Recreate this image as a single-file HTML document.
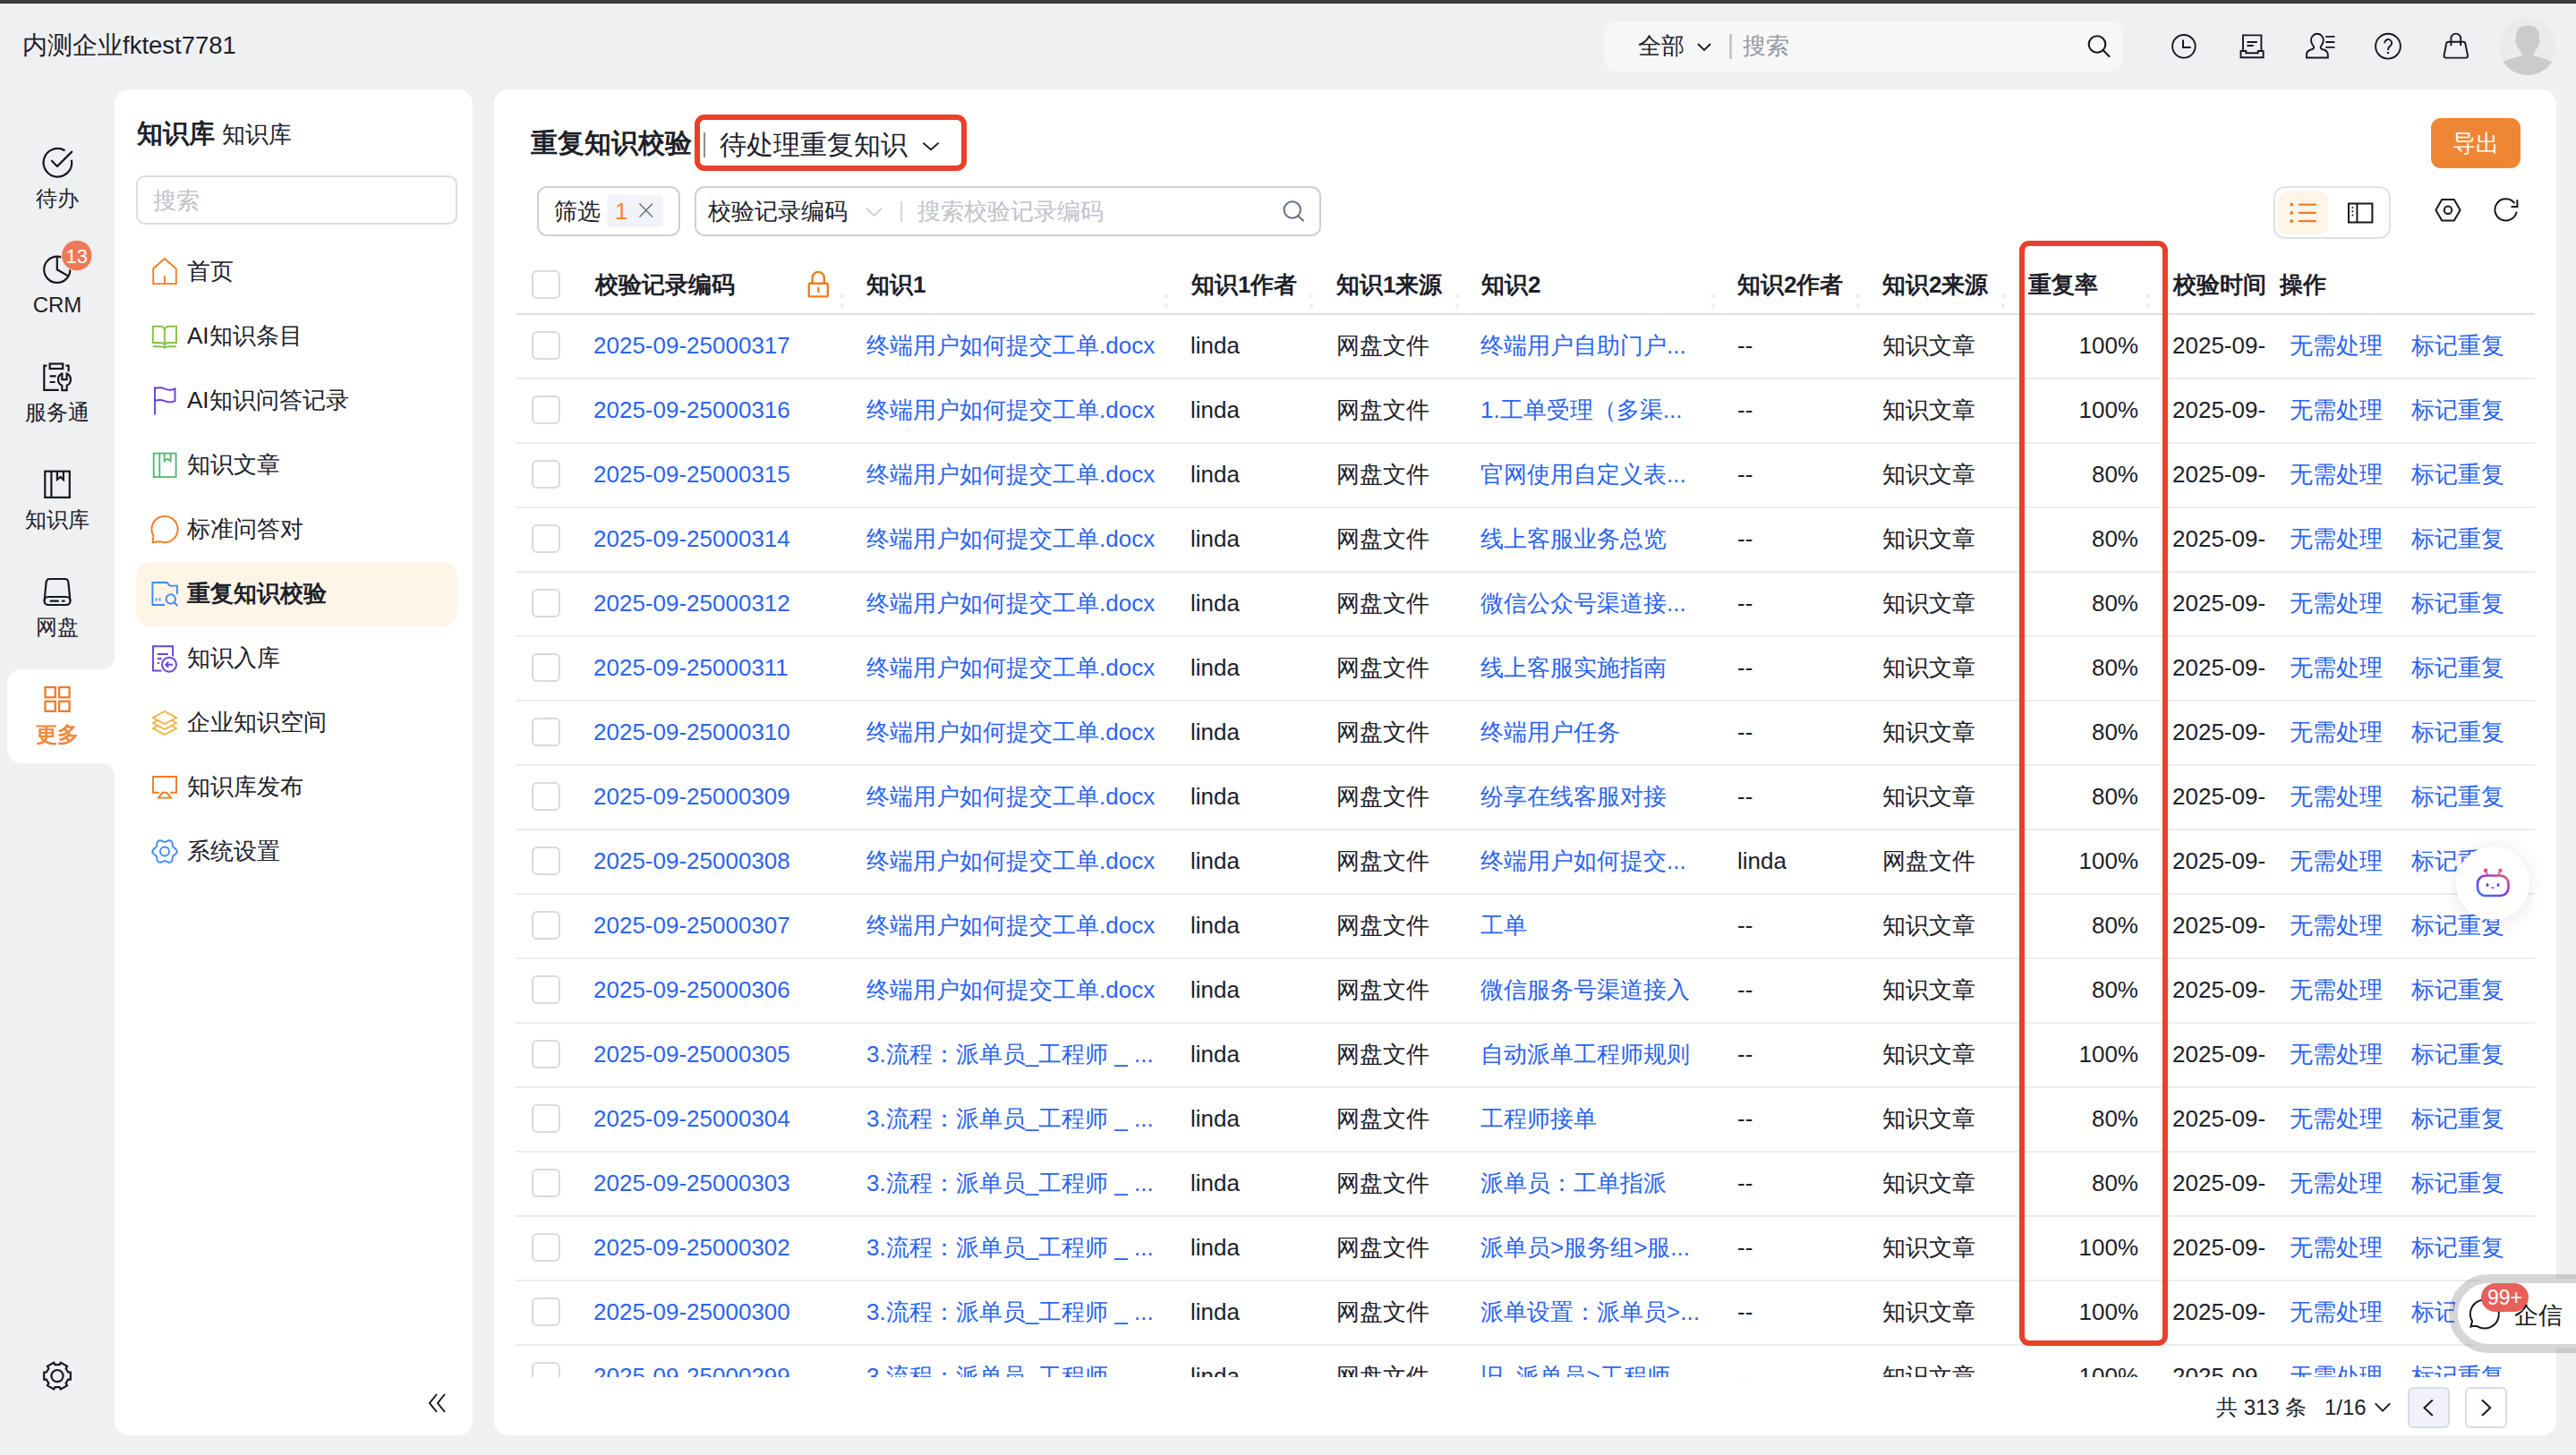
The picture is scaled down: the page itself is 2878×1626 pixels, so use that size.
<!DOCTYPE html>
<html><head><meta charset="utf-8">
<style>
*{box-sizing:border-box;margin:0;padding:0}
html,body{width:2878px;height:1626px;overflow:hidden;background:#eff0f2;font-family:"Liberation Sans",sans-serif;color:#1d2129;position:relative}
.abs{position:absolute}
.topbar{position:absolute;left:0;top:0;width:2878px;height:4px;background:#3b3b3b}
.company{position:absolute;left:25px;top:33px;font-size:27.5px;line-height:36px;color:#1d2129;white-space:nowrap}
.gsearch{position:absolute;left:1792px;top:24px;width:580px;height:56px;border-radius:14px;background:#f7f7f8}
.panel{position:absolute;background:#fff;border-radius:16px}
.rail-item{position:absolute;left:0;width:128px;text-align:center;font-size:24px;line-height:30px;color:#1d2129}
.menu{position:absolute;left:209px;font-size:26px;line-height:32px;color:#1d2129;white-space:nowrap}
.micon{position:absolute;left:168px;width:32px;height:32px}
.c{position:absolute;top:19px;font-size:26px;line-height:32px;white-space:nowrap;color:#1d2129}
.lk{color:#2a64f2}
.row{position:absolute;left:0;width:2878px;height:72px}
.row::after{content:"";position:absolute;left:576px;width:2256px;top:71px;height:2px;background:#ebecf0}
.cb{position:absolute;top:19px;width:32px;height:32px;border:2px solid #d9dae0;border-radius:6px;background:#fff}
.th{position:absolute;top:302px;font-size:26px;line-height:32px;font-weight:bold;color:#1d2129;white-space:nowrap}
.rs{position:absolute;top:329px;width:4px;height:15px;background:linear-gradient(#eceffa 0 4px,transparent 4px 11px,#eceffa 11px 15px)}
</style></head>
<body>
<div class="topbar"></div>
<div class="company">内测企业fktest7781</div>
<div class="gsearch"></div>
<div class="abs" style="left:1830px;top:35px;font-size:26px;line-height:32px">全部</div>
<div class="abs" style="left:1947px;top:35px;font-size:26px;line-height:32px;color:#9499a3">搜索</div>
<div class="abs" style="left:1932px;top:38px;width:2.5px;height:28px;background:#c3c6cd"></div>

<!-- left rail -->
<div class="rail-item" style="top:207px">待办</div>
<div class="rail-item" style="top:326px">CRM</div>
<div class="rail-item" style="top:446px">服务通</div>
<div class="rail-item" style="top:566px">知识库</div>
<div class="rail-item" style="top:686px">网盘</div>
<div class="abs" style="left:8px;top:748px;width:140px;height:105px;background:#fff;border-radius:16px 0 0 16px"></div>
<div class="abs" style="left:112px;top:730px;width:20px;height:18px;background:#fff"></div>
<div class="abs" style="left:100px;top:720px;width:28px;height:28px;background:#eff0f2;border-bottom-right-radius:14px"></div>
<div class="abs" style="left:112px;top:853px;width:20px;height:18px;background:#fff"></div>
<div class="abs" style="left:100px;top:853px;width:28px;height:28px;background:#eff0f2;border-top-right-radius:14px"></div>
<div class="rail-item" style="top:806px;color:#f0883a;font-weight:bold">更多</div>

<!-- sidebar -->
<div class="panel" style="left:128px;top:100px;width:400px;height:1504px"></div>
<div class="abs" style="left:153px;top:130px;font-size:29px;line-height:38px;font-weight:bold;white-space:nowrap">知识库 <span style="font-weight:normal;font-size:26px">知识库</span></div>
<div class="abs" style="left:152px;top:196px;width:359px;height:55px;border:2px solid #dcdde3;border-radius:10px"></div>
<div class="abs" style="left:171px;top:208px;font-size:26px;line-height:32px;color:#c0c2c9">搜索</div>
<div class="abs" style="left:152px;top:628px;width:359px;height:72px;background:#fef5e7;border-radius:16px"></div>
<div class="menu" style="top:287px">首页</div>
<div class="menu" style="top:359px">AI知识条目</div>
<div class="menu" style="top:431px">AI知识问答记录</div>
<div class="menu" style="top:503px">知识文章</div>
<div class="menu" style="top:575px">标准问答对</div>
<div class="menu" style="top:647px;font-weight:bold">重复知识校验</div>
<div class="menu" style="top:719px">知识入库</div>
<div class="menu" style="top:791px">企业知识空间</div>
<div class="menu" style="top:863px">知识库发布</div>
<div class="menu" style="top:935px">系统设置</div>

<!-- main panel -->
<div class="panel" style="left:552px;top:100px;width:2304px;height:1504px"></div>
<div class="abs" style="left:593px;top:141px;font-size:30px;line-height:38px;font-weight:bold;white-space:nowrap">重复知识校验</div>
<div class="abs" style="left:786px;top:148px;width:2.2px;height:28px;background:#8a8f99"></div>
<div class="abs" style="left:804px;top:143px;font-size:30px;line-height:38px;white-space:nowrap;color:#1d2129">待处理重复知识</div>
<div class="abs" style="left:776px;top:128px;width:304px;height:63px;border:6px solid #e8402a;border-radius:11px"></div>

<div class="abs" style="left:2716px;top:132px;width:100px;height:56px;background:#ef8634;border-radius:11px;color:#fff;font-size:26px;line-height:57px;text-align:center">导出</div>

<div class="abs" style="left:600px;top:208px;width:160px;height:56px;border:2px solid #cdd0d8;border-radius:11px"></div>
<div class="abs" style="left:619px;top:220px;font-size:26px;line-height:32px">筛选</div>
<div class="abs" style="left:678px;top:218px;width:63px;height:36px;background:#f1f3f9;border-radius:4px"></div>
<div class="abs" style="left:687px;top:220px;font-size:26px;line-height:32px;color:#f0883a">1</div>

<div class="abs" style="left:776px;top:208px;width:700px;height:56px;border:2px solid #cdd0d8;border-radius:11px"></div>
<div class="abs" style="left:791px;top:220px;font-size:26px;line-height:32px;white-space:nowrap">校验记录编码</div>
<div class="abs" style="left:1006px;top:225px;width:2px;height:23px;background:#d5d7de"></div>
<div class="abs" style="left:1025px;top:220px;font-size:26px;line-height:32px;white-space:nowrap;color:#c0c2c9">搜索校验记录编码</div>

<div class="abs" style="left:2540px;top:208px;width:131px;height:59px;border:2px solid #e0e1e8;border-radius:13px"></div>
<div class="abs" style="left:2545px;top:214px;width:56px;height:48px;background:#fef5e7;border-radius:10px"></div>

<!-- table header -->
<div class="cb" style="left:594px;top:302px"></div>
<div class="th" style="left:665px">校验记录编码</div>
<div class="th" style="left:968px">知识1</div>
<div class="th" style="left:1331px">知识1作者</div>
<div class="th" style="left:1493px">知识1来源</div>
<div class="th" style="left:1655px">知识2</div>
<div class="th" style="left:1941px">知识2作者</div>
<div class="th" style="left:2103px">知识2来源</div>
<div class="th" style="left:2266px">重复率</div>
<div class="th" style="left:2428px">校验时间</div>
<div class="th" style="left:2547px">操作</div>
<div class="rs" style="left:939px"></div>
<div class="rs" style="left:1301px"></div>
<div class="rs" style="left:1463px"></div>
<div class="rs" style="left:1626px"></div>
<div class="rs" style="left:1912px"></div>
<div class="rs" style="left:2074px"></div>
<div class="rs" style="left:2236px"></div>
<div class="rs" style="left:2398px"></div>
<div class="abs" style="left:576px;top:350px;width:2256px;height:2px;background:#dfe0e6"></div>

<div class="abs" style="left:0;top:351px;width:2878px;height:1188px;overflow:hidden">
<div class="row" style="top:0px">
<div class="cb" style="left:594px"></div>
<span class="c lk" style="left:663px">2025-09-25000317</span>
<span class="c lk" style="left:968px">终端用户如何提交工单.docx</span>
<span class="c" style="left:1330px">linda</span>
<span class="c" style="left:1493px">网盘文件</span>
<span class="c lk" style="left:1654px">终端用户自助门户...</span>
<span class="c" style="left:1941px">--</span>
<span class="c" style="left:2103px">知识文章</span>
<span class="c rt" style="right:489px">100%</span>
<span class="c" style="left:2427px">2025-09-</span>
<span class="c lk" style="left:2558px">无需处理</span>
<span class="c lk" style="left:2694px">标记重复</span>
</div>
<div class="row" style="top:72px">
<div class="cb" style="left:594px"></div>
<span class="c lk" style="left:663px">2025-09-25000316</span>
<span class="c lk" style="left:968px">终端用户如何提交工单.docx</span>
<span class="c" style="left:1330px">linda</span>
<span class="c" style="left:1493px">网盘文件</span>
<span class="c lk" style="left:1654px">1.工单受理（多渠...</span>
<span class="c" style="left:1941px">--</span>
<span class="c" style="left:2103px">知识文章</span>
<span class="c rt" style="right:489px">100%</span>
<span class="c" style="left:2427px">2025-09-</span>
<span class="c lk" style="left:2558px">无需处理</span>
<span class="c lk" style="left:2694px">标记重复</span>
</div>
<div class="row" style="top:144px">
<div class="cb" style="left:594px"></div>
<span class="c lk" style="left:663px">2025-09-25000315</span>
<span class="c lk" style="left:968px">终端用户如何提交工单.docx</span>
<span class="c" style="left:1330px">linda</span>
<span class="c" style="left:1493px">网盘文件</span>
<span class="c lk" style="left:1654px">官网使用自定义表...</span>
<span class="c" style="left:1941px">--</span>
<span class="c" style="left:2103px">知识文章</span>
<span class="c rt" style="right:489px">80%</span>
<span class="c" style="left:2427px">2025-09-</span>
<span class="c lk" style="left:2558px">无需处理</span>
<span class="c lk" style="left:2694px">标记重复</span>
</div>
<div class="row" style="top:216px">
<div class="cb" style="left:594px"></div>
<span class="c lk" style="left:663px">2025-09-25000314</span>
<span class="c lk" style="left:968px">终端用户如何提交工单.docx</span>
<span class="c" style="left:1330px">linda</span>
<span class="c" style="left:1493px">网盘文件</span>
<span class="c lk" style="left:1654px">线上客服业务总览</span>
<span class="c" style="left:1941px">--</span>
<span class="c" style="left:2103px">知识文章</span>
<span class="c rt" style="right:489px">80%</span>
<span class="c" style="left:2427px">2025-09-</span>
<span class="c lk" style="left:2558px">无需处理</span>
<span class="c lk" style="left:2694px">标记重复</span>
</div>
<div class="row" style="top:288px">
<div class="cb" style="left:594px"></div>
<span class="c lk" style="left:663px">2025-09-25000312</span>
<span class="c lk" style="left:968px">终端用户如何提交工单.docx</span>
<span class="c" style="left:1330px">linda</span>
<span class="c" style="left:1493px">网盘文件</span>
<span class="c lk" style="left:1654px">微信公众号渠道接...</span>
<span class="c" style="left:1941px">--</span>
<span class="c" style="left:2103px">知识文章</span>
<span class="c rt" style="right:489px">80%</span>
<span class="c" style="left:2427px">2025-09-</span>
<span class="c lk" style="left:2558px">无需处理</span>
<span class="c lk" style="left:2694px">标记重复</span>
</div>
<div class="row" style="top:360px">
<div class="cb" style="left:594px"></div>
<span class="c lk" style="left:663px">2025-09-25000311</span>
<span class="c lk" style="left:968px">终端用户如何提交工单.docx</span>
<span class="c" style="left:1330px">linda</span>
<span class="c" style="left:1493px">网盘文件</span>
<span class="c lk" style="left:1654px">线上客服实施指南</span>
<span class="c" style="left:1941px">--</span>
<span class="c" style="left:2103px">知识文章</span>
<span class="c rt" style="right:489px">80%</span>
<span class="c" style="left:2427px">2025-09-</span>
<span class="c lk" style="left:2558px">无需处理</span>
<span class="c lk" style="left:2694px">标记重复</span>
</div>
<div class="row" style="top:432px">
<div class="cb" style="left:594px"></div>
<span class="c lk" style="left:663px">2025-09-25000310</span>
<span class="c lk" style="left:968px">终端用户如何提交工单.docx</span>
<span class="c" style="left:1330px">linda</span>
<span class="c" style="left:1493px">网盘文件</span>
<span class="c lk" style="left:1654px">终端用户任务</span>
<span class="c" style="left:1941px">--</span>
<span class="c" style="left:2103px">知识文章</span>
<span class="c rt" style="right:489px">80%</span>
<span class="c" style="left:2427px">2025-09-</span>
<span class="c lk" style="left:2558px">无需处理</span>
<span class="c lk" style="left:2694px">标记重复</span>
</div>
<div class="row" style="top:504px">
<div class="cb" style="left:594px"></div>
<span class="c lk" style="left:663px">2025-09-25000309</span>
<span class="c lk" style="left:968px">终端用户如何提交工单.docx</span>
<span class="c" style="left:1330px">linda</span>
<span class="c" style="left:1493px">网盘文件</span>
<span class="c lk" style="left:1654px">纷享在线客服对接</span>
<span class="c" style="left:1941px">--</span>
<span class="c" style="left:2103px">知识文章</span>
<span class="c rt" style="right:489px">80%</span>
<span class="c" style="left:2427px">2025-09-</span>
<span class="c lk" style="left:2558px">无需处理</span>
<span class="c lk" style="left:2694px">标记重复</span>
</div>
<div class="row" style="top:576px">
<div class="cb" style="left:594px"></div>
<span class="c lk" style="left:663px">2025-09-25000308</span>
<span class="c lk" style="left:968px">终端用户如何提交工单.docx</span>
<span class="c" style="left:1330px">linda</span>
<span class="c" style="left:1493px">网盘文件</span>
<span class="c lk" style="left:1654px">终端用户如何提交...</span>
<span class="c" style="left:1941px">linda</span>
<span class="c" style="left:2103px">网盘文件</span>
<span class="c rt" style="right:489px">100%</span>
<span class="c" style="left:2427px">2025-09-</span>
<span class="c lk" style="left:2558px">无需处理</span>
<span class="c lk" style="left:2694px">标记重复</span>
</div>
<div class="row" style="top:648px">
<div class="cb" style="left:594px"></div>
<span class="c lk" style="left:663px">2025-09-25000307</span>
<span class="c lk" style="left:968px">终端用户如何提交工单.docx</span>
<span class="c" style="left:1330px">linda</span>
<span class="c" style="left:1493px">网盘文件</span>
<span class="c lk" style="left:1654px">工单</span>
<span class="c" style="left:1941px">--</span>
<span class="c" style="left:2103px">知识文章</span>
<span class="c rt" style="right:489px">80%</span>
<span class="c" style="left:2427px">2025-09-</span>
<span class="c lk" style="left:2558px">无需处理</span>
<span class="c lk" style="left:2694px">标记重复</span>
</div>
<div class="row" style="top:720px">
<div class="cb" style="left:594px"></div>
<span class="c lk" style="left:663px">2025-09-25000306</span>
<span class="c lk" style="left:968px">终端用户如何提交工单.docx</span>
<span class="c" style="left:1330px">linda</span>
<span class="c" style="left:1493px">网盘文件</span>
<span class="c lk" style="left:1654px">微信服务号渠道接入</span>
<span class="c" style="left:1941px">--</span>
<span class="c" style="left:2103px">知识文章</span>
<span class="c rt" style="right:489px">80%</span>
<span class="c" style="left:2427px">2025-09-</span>
<span class="c lk" style="left:2558px">无需处理</span>
<span class="c lk" style="left:2694px">标记重复</span>
</div>
<div class="row" style="top:792px">
<div class="cb" style="left:594px"></div>
<span class="c lk" style="left:663px">2025-09-25000305</span>
<span class="c lk" style="left:968px">3.流程：派单员_工程师 _ ...</span>
<span class="c" style="left:1330px">linda</span>
<span class="c" style="left:1493px">网盘文件</span>
<span class="c lk" style="left:1654px">自动派单工程师规则</span>
<span class="c" style="left:1941px">--</span>
<span class="c" style="left:2103px">知识文章</span>
<span class="c rt" style="right:489px">100%</span>
<span class="c" style="left:2427px">2025-09-</span>
<span class="c lk" style="left:2558px">无需处理</span>
<span class="c lk" style="left:2694px">标记重复</span>
</div>
<div class="row" style="top:864px">
<div class="cb" style="left:594px"></div>
<span class="c lk" style="left:663px">2025-09-25000304</span>
<span class="c lk" style="left:968px">3.流程：派单员_工程师 _ ...</span>
<span class="c" style="left:1330px">linda</span>
<span class="c" style="left:1493px">网盘文件</span>
<span class="c lk" style="left:1654px">工程师接单</span>
<span class="c" style="left:1941px">--</span>
<span class="c" style="left:2103px">知识文章</span>
<span class="c rt" style="right:489px">80%</span>
<span class="c" style="left:2427px">2025-09-</span>
<span class="c lk" style="left:2558px">无需处理</span>
<span class="c lk" style="left:2694px">标记重复</span>
</div>
<div class="row" style="top:936px">
<div class="cb" style="left:594px"></div>
<span class="c lk" style="left:663px">2025-09-25000303</span>
<span class="c lk" style="left:968px">3.流程：派单员_工程师 _ ...</span>
<span class="c" style="left:1330px">linda</span>
<span class="c" style="left:1493px">网盘文件</span>
<span class="c lk" style="left:1654px">派单员：工单指派</span>
<span class="c" style="left:1941px">--</span>
<span class="c" style="left:2103px">知识文章</span>
<span class="c rt" style="right:489px">80%</span>
<span class="c" style="left:2427px">2025-09-</span>
<span class="c lk" style="left:2558px">无需处理</span>
<span class="c lk" style="left:2694px">标记重复</span>
</div>
<div class="row" style="top:1008px">
<div class="cb" style="left:594px"></div>
<span class="c lk" style="left:663px">2025-09-25000302</span>
<span class="c lk" style="left:968px">3.流程：派单员_工程师 _ ...</span>
<span class="c" style="left:1330px">linda</span>
<span class="c" style="left:1493px">网盘文件</span>
<span class="c lk" style="left:1654px">派单员>服务组>服...</span>
<span class="c" style="left:1941px">--</span>
<span class="c" style="left:2103px">知识文章</span>
<span class="c rt" style="right:489px">100%</span>
<span class="c" style="left:2427px">2025-09-</span>
<span class="c lk" style="left:2558px">无需处理</span>
<span class="c lk" style="left:2694px">标记重复</span>
</div>
<div class="row" style="top:1080px">
<div class="cb" style="left:594px"></div>
<span class="c lk" style="left:663px">2025-09-25000300</span>
<span class="c lk" style="left:968px">3.流程：派单员_工程师 _ ...</span>
<span class="c" style="left:1330px">linda</span>
<span class="c" style="left:1493px">网盘文件</span>
<span class="c lk" style="left:1654px">派单设置：派单员>...</span>
<span class="c" style="left:1941px">--</span>
<span class="c" style="left:2103px">知识文章</span>
<span class="c rt" style="right:489px">100%</span>
<span class="c" style="left:2427px">2025-09-</span>
<span class="c lk" style="left:2558px">无需处理</span>
<span class="c lk" style="left:2694px">标记重复</span>
</div>
<div class="row" style="top:1152px">
<div class="cb" style="left:594px"></div>
<span class="c lk" style="left:663px">2025-09-25000299</span>
<span class="c lk" style="left:968px">3.流程：派单员_工程师</span>
<span class="c" style="left:1330px">linda</span>
<span class="c" style="left:1493px">网盘文件</span>
<span class="c lk" style="left:1654px">旧_派单员>工程师</span>
<span class="c" style="left:1941px">--</span>
<span class="c" style="left:2103px">知识文章</span>
<span class="c rt" style="right:489px">100%</span>
<span class="c" style="left:2427px">2025-09-</span>
<span class="c lk" style="left:2558px">无需处理</span>
<span class="c lk" style="left:2694px">标记重复</span>
</div>
</div>

<div class="abs" style="left:2256px;top:269px;width:165.5px;height:1234.5px;border:6px solid #e8402a;border-radius:11px"></div>

<!-- pagination -->
<div class="abs" style="left:2476px;top:1557px;font-size:24px;line-height:32px;white-space:nowrap">共 313 条</div>
<div class="abs" style="left:2597px;top:1557px;font-size:24px;line-height:32px;white-space:nowrap">1/16</div>
<div class="abs" style="left:2690px;top:1550px;width:47px;height:46px;background:#f1f2f9;border:2px solid #d9dbe3;border-radius:6px"></div>
<div class="abs" style="left:2754px;top:1550px;width:47px;height:46px;background:#fff;border:2px solid #d9dbe3;border-radius:6px"></div>


<svg class="abs" style="left:0;top:0" width="2878" height="1626" viewBox="0 0 2878 1626" fill="none" stroke-linecap="butt" stroke-linejoin="miter">
<g stroke="#141820" stroke-width="2.2">
 <!-- 待办 -->
 <path d="M72.5 168.2 A15.8 15.8 0 1 0 79.9 178.7"/>
 <path d="M57.9 179.7 L63.9 185.9 L80.2 169.6" stroke-linecap="round" stroke-linejoin="round"/>
 <!-- CRM -->
 <circle cx="63.8" cy="301.3" r="14.6"/>
 <path d="M63.8 286.7 V301.3 L76.6 308.6"/>
 <!-- 服务通 -->
 <path d="M52.4 408.7 H49.3 V435.9 H65.8"/>
 <rect x="55.6" y="406.5" width="14.6" height="5.5"/>
 <path d="M73.5 408.7 H76.6 V415.3"/>
 <path d="M55.6 420.3 H62.7 M55.6 427 H61.6"/>
 <path d="M69.3 417.6 A7.2 7.2 0 0 0 69.3 430.8 V436.2 H74.6 V430.8 A7.2 7.2 0 0 0 74.6 417.6 V424.2 H69.3 Z"/>
 <!-- 知识库 -->
 <rect x="50.3" y="526.7" width="27.5" height="29.2"/>
 <path d="M57.4 526.7 V555.9"/>
 <path d="M63.9 526.7 V536 L67.5 533 L70.9 536 V526.7"/>
 <!-- 网盘 -->
 <path d="M49.6 671.5 L51.6 650.8 Q52 647 55.5 647 H72.5 Q76 647 76.4 650.8 L78.4 671.5"/>
 <rect x="49.5" y="667" width="29" height="9" rx="4.5"/>
 <path d="M55.6 671.6 H65.8 M68.9 671.6 H72.6"/>
 <!-- gear bottom -->
 <path d="M76.1 1533.5 L78.8 1533.5 L78.8 1541.7 L76.1 1541.7 L73.6 1546.0 L75.0 1548.4 L67.8 1552.5 L66.5 1550.1 L61.5 1550.1 L60.2 1552.5 L53.0 1548.4 L54.4 1546.0 L51.9 1541.7 L49.2 1541.7 L49.2 1533.5 L51.9 1533.5 L54.4 1529.2 L53.0 1526.8 L60.2 1522.7 L61.5 1525.1 L66.5 1525.1 L67.8 1522.7 L75.0 1526.8 L73.6 1529.2Z"/>
 <circle cx="64" cy="1537.6" r="6.6"/>
 <!-- collapse << -->
 <path d="M488 1558 L480 1568 L488 1578 M497 1558 L489 1568 L497 1578" stroke-width="2"/>
</g>
<!-- 更多 -->
<g stroke="#ee7d2a" stroke-width="2.3">
 <rect x="50.5" y="768" width="11.3" height="11.3"/><rect x="66.1" y="768" width="11.5" height="11.3"/>
 <rect x="50.5" y="783.8" width="11.3" height="11"/><rect x="66.1" y="783.8" width="11.5" height="11"/>
</g>
<!-- CRM badge -->
<circle cx="85.8" cy="285.5" r="17.2" fill="#ee7858" stroke="#eff0f2" stroke-width="1"/>
<text x="85.8" y="293.5" fill="#fff" font-size="22" text-anchor="middle" font-family="Liberation Sans">13</text>

<!-- sidebar menu icons -->
<g stroke-width="1.8">
 <path d="M171.2 317.1 V300.2 L183.9 289 L196.8 300.2 V317.1 Z M183.9 317 V308" stroke="#ee7d22"/>
 <path d="M170.8 383 V364.8 H178.5 Q183.9 364.8 183.9 369.5 Q183.9 364.8 189.3 364.8 H197 V383 H189.3 Q183.9 383 183.9 386.5 Q183.9 383 178.5 383 Z M183.9 369.5 V383 M170.8 387.2 H178.5 Q183.9 387.2 183.9 389.5 Q183.9 387.2 189.3 387.2 H197" stroke="#82c341" stroke-width="1.9"/>
 <path d="M173 463.5 V432.2 M173 434.5 Q178.5 432 184 434.5 T195.5 434.5 V448.2 Q190 450.5 184 448.2 T173 448.2" stroke="#6b3fe0" stroke-width="1.9"/>
 <path d="M171.7 506.6 H196.6 V533.1 H171.7 Z M178.3 506.6 V533.1 M183.6 506.6 V515.2 L187.1 512.8 L190.7 515.2 V506.6" stroke="#4cb86b"/>
 <path d="M171.4 598.8 A14.6 14.6 0 1 1 179.0 605.2 Q174.5 605 170.5 606.4 Z" stroke="#ee7d22" stroke-width="1.9" stroke-linejoin="round"/>
 <path d="M184 676 H170.4 V651 H186.6 L189.6 654.6 H197.9 V664" stroke="#3d8af7" stroke-width="1.9"/>
 <circle cx="190.8" cy="669.5" r="5.2" stroke="#3d8af7" stroke-width="1.9"/>
 <path d="M194.6 673.3 L198.4 677" stroke="#3d8af7" stroke-width="1.9"/>
 <path d="M174.6 668.3 V671.7 M178.6 668.3 V671.7" stroke="#3d8af7" stroke-width="1.6"/>
 <path d="M180.5 749.5 H171 V722.3 H193.1 V733.5 M176 731 H187.8 M176 736 H180.5 M176 741 H178" stroke="#6b3fe0" stroke-width="1.9"/>
 <circle cx="189" cy="742.7" r="8" stroke="#6b3fe0" stroke-width="1.9"/>
 <path d="M193 742.7 H185.5 M188.3 739.6 L185.2 742.7 L188.3 745.8" stroke="#6b3fe0" stroke-width="1.9"/>
 <g stroke="#f2b13b" stroke-width="1.9" fill="#fff" stroke-linejoin="round">
  <path d="M170.8 814 L184 807 L197.2 814 L184 821 Z"/>
  <path d="M170.8 808 L184 801 L197.2 808 L184 815 Z"/>
  <path d="M170.8 802 L184 795 L197.2 802 L184 809 Z"/>
 </g>
 <path d="M178 885.8 H171 V868 H197 V885.8 H190 M181.6 885.8 H186.4 L191 891.6 H177 Z" stroke="#ee7d22" stroke-width="1.9"/>
 <path d="M197.7 951.5 L197.6 952.2 L197.3 952.9 L196.9 953.5 L196.4 954.1 L195.8 954.7 L195.2 955.1 L194.6 955.6 L194.0 956.0 L193.6 956.4 L193.3 956.9 L193.0 957.4 L192.9 958.0 L192.8 958.6 L192.7 959.4 L192.6 960.1 L192.5 960.9 L192.2 961.7 L191.9 962.4 L191.4 962.9 L190.8 963.4 L190.2 963.6 L189.5 963.8 L188.7 963.7 L187.9 963.5 L187.2 963.3 L186.4 963.0 L185.8 962.7 L185.1 962.4 L184.6 962.3 L184.0 962.2 L183.4 962.3 L182.9 962.4 L182.2 962.7 L181.6 963.0 L180.8 963.3 L180.1 963.5 L179.3 963.7 L178.5 963.8 L177.8 963.6 L177.2 963.4 L176.6 962.9 L176.1 962.4 L175.8 961.7 L175.5 960.9 L175.4 960.1 L175.3 959.4 L175.2 958.6 L175.1 958.0 L175.0 957.4 L174.7 956.9 L174.4 956.4 L174.0 956.0 L173.4 955.6 L172.8 955.1 L172.2 954.7 L171.6 954.1 L171.1 953.5 L170.7 952.9 L170.4 952.2 L170.3 951.5 L170.4 950.8 L170.7 950.1 L171.1 949.5 L171.6 948.9 L172.2 948.3 L172.8 947.9 L173.4 947.4 L174.0 947.0 L174.4 946.6 L174.7 946.1 L175.0 945.6 L175.1 945.0 L175.2 944.4 L175.3 943.6 L175.4 942.9 L175.5 942.1 L175.8 941.3 L176.1 940.6 L176.6 940.1 L177.2 939.6 L177.8 939.4 L178.5 939.2 L179.3 939.3 L180.1 939.5 L180.8 939.7 L181.6 940.0 L182.2 940.3 L182.9 940.6 L183.4 940.7 L184.0 940.8 L184.6 940.7 L185.1 940.6 L185.8 940.3 L186.4 940.0 L187.2 939.7 L187.9 939.5 L188.7 939.3 L189.5 939.2 L190.2 939.4 L190.8 939.6 L191.4 940.1 L191.9 940.6 L192.2 941.3 L192.5 942.1 L192.6 942.9 L192.7 943.6 L192.8 944.4 L192.9 945.0 L193.0 945.6 L193.3 946.1 L193.6 946.6 L194.0 947.0 L194.6 947.4 L195.2 947.9 L195.8 948.3 L196.4 948.9 L196.9 949.5 L197.3 950.1 L197.6 950.8Z" stroke="#3d8af7" stroke-width="1.9"/>
 <circle cx="184" cy="951.5" r="5" stroke="#3d8af7" stroke-width="1.9"/>
</g>

<!-- top bar icons -->
<g stroke="#141820" stroke-width="1.9">
 <path d="M1897 49 L1904 56 L1911 49" stroke-width="1.8"/>
 <circle cx="2343" cy="49.5" r="9.3" stroke-width="2.1"/>
 <path d="M2349.8 56.3 L2356.5 63" stroke-width="2.1" stroke-linecap="round"/>
 <circle cx="2439.9" cy="51.8" r="12.8"/>
 <path d="M2439 44.4 V53 H2447.7" stroke-width="2"/>
 <path d="M2506 56.6 V39.4 H2526.4 V56.6 M2510.4 47 H2521.8 M2510.4 51 H2517.7" stroke-width="1.9"/>
 <path d="M2503.5 57 H2509.3 V59.3 H2522.7 V57 H2528.6 V64.3 H2503.5 Z" stroke-width="1.9"/>
 <path d="M2577 64.5 V61 Q2577 56.5 2583.5 55 Q2585.5 54.3 2585 52 Q2582 48.5 2582 45 A6.9 7.2 0 0 1 2595.8 45 Q2595.8 48.5 2592.8 52 Q2592.3 54.3 2594.3 55 Q2600.8 56.5 2600.8 61 V64.5 Z" stroke-width="1.9"/>
 <path d="M2599 40.9 H2607.7 M2599 47 H2607.7 M2599 52.9 H2607.7" stroke-width="1.9" stroke-linecap="round"/>
 <circle cx="2668" cy="51.7" r="13.9" stroke-width="1.9"/>
 <path d="M2664.2 48.2 A4 4 0 1 1 2670.4 51.4 Q2668 53 2668 56" stroke-width="1.9"/>
 <circle cx="2668" cy="59" r="1.2" fill="#141820" stroke="none"/>
 <path d="M2738.4 51.2 V43 A5.4 5.4 0 0 1 2749.2 43 V51.2" stroke-width="1.9"/>
 <path d="M2735.5 46.8 H2752 Q2754 46.8 2754.4 48.8 L2757 62 Q2757.3 64.6 2755 64.6 H2732.6 Q2730.3 64.6 2730.6 62 L2733.1 48.8 Q2733.5 46.8 2735.5 46.8 Z" stroke-width="1.9"/>
</g>
<!-- avatar -->
<circle cx="2824" cy="52" r="32" fill="#ebebeb"/>
<clipPath id="avc"><circle cx="2824" cy="52" r="32"/></clipPath>
<path clip-path="url(#avc)" d="M2811.2 40 Q2811.2 28.5 2824 28.5 Q2836.8 28.5 2836.8 40 L2837.6 46.5 Q2836 53 2832 57.5 L2830 62.5 Q2845 65 2856 72 V90 H2790 V72 Q2803 65 2818 62.5 L2816 57.5 Q2812 53 2810.4 46.5 Z" fill="#cbcbcb"/>

<!-- main header icons -->
<g stroke="#141820" stroke-width="1.9">
 <path d="M1031.3 159.6 L1040 167.2 L1048.7 159.6" stroke-width="1.9"/>
 <path d="M968 232.8 L976.5 241 L985 232.8" stroke="#c5c8d0" stroke-width="1.6"/>
 <path d="M714.5 227.5 L729 242.6 M729 227.5 L714.5 242.6" stroke="#6b7280" stroke-width="1.5"/>
 <circle cx="1443.8" cy="234.5" r="9.2" stroke="#667085" stroke-width="2"/>
 <path d="M1450.6 241.4 L1456 246.6" stroke="#667085" stroke-width="2.1" stroke-linecap="round"/>
 <g stroke="#ee7d2a" stroke-width="2.3" stroke-linecap="round">
  <path d="M2568.8 228.6 H2587 M2568.8 237.9 H2587 M2568.8 247.2 H2587"/>
 </g>
 <circle cx="2560.3" cy="228.6" r="1.9" fill="#ee7d2a" stroke="none"/>
 <circle cx="2560.3" cy="237.9" r="1.9" fill="#ee7d2a" stroke="none"/>
 <circle cx="2560.3" cy="247.2" r="1.9" fill="#ee7d2a" stroke="none"/>
 <rect x="2624" y="227.5" width="26.4" height="21" stroke-width="2"/>
 <path d="M2633.4 227.5 V248.5" stroke-width="2"/>
 <circle cx="2628.4" cy="232" r="1" fill="#141820" stroke="none"/>
 <circle cx="2628.4" cy="236.3" r="1" fill="#141820" stroke="none"/>
 <circle cx="2628.4" cy="240.5" r="1" fill="#141820" stroke="none"/>
 <path d="M2748.6 234.8 L2741.8 246.6 L2728.2 246.6 L2721.4 234.8 L2728.2 223.0 L2741.8 223.0Z" stroke-width="2" stroke-linejoin="round"/>
 <circle cx="2735" cy="234.8" r="4.2" stroke-width="2"/>
 <path d="M2811.6 236.6 A12.2 12.2 0 1 1 2809.5 227.2" stroke-width="2"/>
 <path d="M2812.4 223.2 V230.9 H2805.5" stroke-width="2"/>
 <!-- lock -->
 <g stroke="#ee7d22" stroke-width="2.4">
  <rect x="903.8" y="316.8" width="21" height="14.6" rx="1"/>
  <path d="M907.6 316.8 V310.5 A6.6 6.6 0 0 1 920.8 310.5 V316.8"/>
  <path d="M914.3 322 V326" stroke-linecap="round"/>
 </g>
 <!-- pagination -->
 <path d="M2653.8 1568.3 L2662 1576.6 L2670.2 1568.3" stroke-width="1.9"/>
 <path d="M2717.8 1564.5 L2708.5 1573.2 L2717.8 1582" stroke-width="2"/>
 <path d="M2773 1564.5 L2782.3 1573.2 L2773 1582" stroke-width="2"/>
</g>

<!-- floating bot -->
<circle cx="2785" cy="987" r="41" fill="#fff" style="filter:drop-shadow(0 2px 10px rgba(0,0,0,0.10))"/>
<defs>
 <linearGradient id="bg1" x1="0" y1="1" x2="1" y2="0">
  <stop offset="0" stop-color="#2f7bf6"/><stop offset="0.55" stop-color="#8a2ee8"/><stop offset="1" stop-color="#e8566e"/>
 </linearGradient>
</defs>
<rect x="2768" y="978.5" width="34.5" height="22.5" rx="9" stroke="url(#bg1)" stroke-width="2.6"/>
<path d="M2779.5 978.5 L2777.5 973.5 M2791 978.5 L2793 973.5" stroke="#d94b8a" stroke-width="1.6"/>
<circle cx="2777" cy="972.8" r="2.3" fill="#e2506a"/><circle cx="2793.5" cy="972.8" r="2.3" fill="#e8606a"/>
<ellipse cx="2779" cy="989" rx="1.5" ry="2" fill="#6a3fe8"/><ellipse cx="2791" cy="989" rx="1.5" ry="2" fill="#6a3fe8"/>
<path d="M2783.5 991.5 Q2785 993 2786.5 991.5" stroke="#6a3fe8" stroke-width="1.2"/>

<!-- 企信 pill -->
<path d="M2890 1429 H2780 A39 39 0 0 0 2780 1507 H2890" stroke="rgba(0,0,0,0.16)" stroke-width="10" fill="#fff"/>
<path d="M2760.5 1482.5 L2762 1476.5 A16 16 0 1 1 2767.6 1482.2 Q2764 1481.2 2760.5 1482.5 Z" stroke="#141820" stroke-width="2" fill="#fff"/>
<rect x="2772" y="1434" width="53" height="32" rx="16" fill="#e8605a"/>
<text x="2798.5" y="1458" fill="#fff" font-size="23" text-anchor="middle" font-family="Liberation Sans">99+</text>
<text x="2809" y="1479" fill="#141820" font-size="27" font-family="Liberation Sans">企信</text>
</svg>


</body></html>
